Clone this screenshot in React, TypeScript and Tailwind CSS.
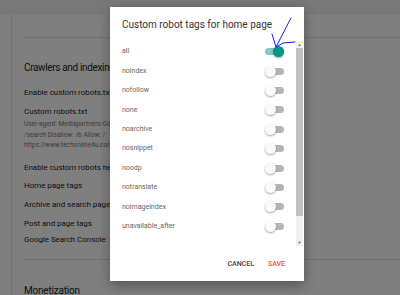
import type { ReactNode } from 'react';

const tags = [
  'all',
  'noindex',
  'nofollow',
  'none',
  'noarchive',
  'nosnippet',
  'noodp',
  'notranslate',
  'noimageindex',
  'unavailable_after',
];

function Toggle({ on }: { on?: boolean }) {
  return (
    <div className="relative w-[19px] h-[11px] flex items-center">
      <div className={`w-full h-[7px] rounded-full ${on ? 'bg-[#80cbc4]' : 'bg-[#b5b5b5]'}`} />
      <div
        className={`absolute top-0 w-[11px] h-[11px] rounded-full shadow-[0_1px_2px_rgba(0,0,0,0.35)] ${
          on ? 'right-0 bg-[#009688]' : 'left-0 bg-[#fafafa]'
        }`}
      />
    </div>
  );
}

function Item({ children, className = '' }: { children: ReactNode; className?: string }) {
  return (
    <div className={`w-[86px] overflow-hidden whitespace-nowrap text-[8px] tracking-[-0.05px] text-[#212121] leading-none ${className}`}>
      {children}
    </div>
  );
}

export default function App() {
  return (
    <div className="relative w-[400px] h-[295px] overflow-hidden bg-white" style={{ fontFamily: 'Roboto, "Noto Sans", sans-serif' }}>
      {/* underlying settings page */}
      <div className="h-[15px] bg-[#f0f0f0]" />
      <div className="flex h-[280px]">
        <div className="w-[12px] border-r border-[#e0e0e0]" />
        <div className="flex-1 pl-[12px]">
          <div className="h-[22px]" />
          <div className="border-t border-[#e0e0e0] pt-[25px]">
            <div className="w-[86px] overflow-hidden whitespace-nowrap text-[10px] tracking-[-0.35px] text-[#212121] leading-none">
              Crawlers and indexing
            </div>
            <Item className="mt-[16px]">Enable custom robots.txt</Item>
            <Item className="mt-[11px]">Custom robots.txt</Item>
            <div className="w-[86px] overflow-hidden whitespace-nowrap mt-[3px] text-[6.5px] text-[#757575] leading-[10.5px]">
              <div>User-agent: Mediapartners-Google</div>
              <div>/search Disallow: /b Allow: /</div>
              <div>https://www.techonline4u.com</div>
            </div>
            <Item className="mt-[13px]">Enable custom robots header tags</Item>
            <Item className="mt-[10px]">Home page tags</Item>
            <Item className="mt-[11px]">Archive and search page tags</Item>
            <Item className="mt-[11px]">Post and page tags</Item>
            <Item className="mt-[8px] text-[#1a73e8]">Google Search Console</Item>
            <div className="mt-[15px] border-t border-[#e0e0e0] pt-[26px]">
              <div className="text-[10px] tracking-[-0.2px] text-[#212121] leading-none">Monetization</div>
            </div>
          </div>
        </div>
      </div>

      {/* scrim */}
      <div className="absolute inset-0 bg-black/50" />

      {/* dialog */}
      <div className="absolute left-[110px] top-[7px] w-[194px] h-[274px] bg-white shadow-[0_4px_12px_rgba(0,0,0,0.35)] flex flex-col">
        <div className="pl-[12px] pt-[13px] text-[10px] leading-none text-[#333]">Custom robot tags for home page</div>
        <div className="mt-[11px] flex h-[205px]">
          <div className="flex-1 pl-[12px] pr-[12px] pt-[1px]">
            {tags.map((t, i) => (
              <div key={t} className="h-[19.4px] flex items-center justify-between">
                <span className="text-[7px] text-[#666]">{t}</span>
                <Toggle on={i === 0} />
              </div>
            ))}
          </div>
          <div className="w-[7px] mr-[1px] bg-[#f1f1f1] flex flex-col items-center">
            <div className="h-[7px] flex items-center justify-center text-[4px] text-[#777]">▲</div>
            <div className="w-full h-[168px] bg-[#c1c1c1]" />
            <div className="flex-1" />
            <div className="h-[7px] flex items-center justify-center text-[4px] text-[#555]">▼</div>
          </div>
        </div>
        <div className="flex justify-end gap-[14px] pr-[19px] mt-[15px] text-[7px] font-medium leading-none">
          <span className="text-[#444]">CANCEL</span>
          <span className="text-[#f4511e]">SAVE</span>
        </div>
      </div>

      {/* hand-drawn annotation */}
      <svg className="absolute left-0 top-0" width="400" height="295" viewBox="0 0 400 295" fill="none">
        <path d="M291 18 L276 47 M272 34 L276 47 L283 43 L295 42" stroke="#1a1aff" strokeWidth="1" strokeLinecap="round" strokeLinejoin="round" />
      </svg>
    </div>
  );
}
